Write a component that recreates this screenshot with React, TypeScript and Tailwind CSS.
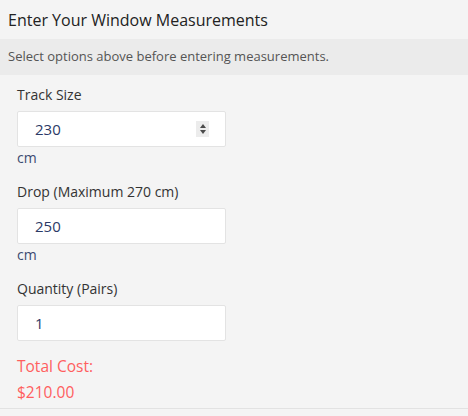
import React from "react";

const font = { fontFamily: "'Open Sans', Lato, sans-serif" };

function Field({
  label,
  value,
  unit,
  spinner,
}: {
  label: string;
  value: string;
  unit?: string;
  spinner?: boolean;
}) {
  return (
    <div className="mb-[14px]">
      <label className="block text-[14px] leading-[20px] text-[#333] mb-[6px]">{label}</label>
      <div className="flex items-center w-[209px] h-[36px] bg-white border border-[#e3e3e3] rounded-[2px]">
        <input
          className="flex-1 min-w-0 h-full pl-[17px] text-[15px] text-[#2c3a66] bg-transparent outline-none"
          defaultValue={value}
          style={font}
        />
        {spinner && (
          <div className="mr-[16px] w-[13px] h-[16px] bg-[#ececec] flex flex-col items-center justify-center gap-[2px]">
            <svg width="6" height="4" viewBox="0 0 6 4">
              <path d="M3 0 L6 4 L0 4 Z" fill="#4a4a4a" />
            </svg>
            <svg width="6" height="4" viewBox="0 0 6 4">
              <path d="M0 0 L6 0 L3 4 Z" fill="#4a4a4a" />
            </svg>
          </div>
        )}
      </div>
      {unit && <div className="mt-[1px] text-[14px] leading-[20px] text-[#3b4a70]">{unit}</div>}
    </div>
  );
}

export default function App() {
  return (
    <div className="w-[468px] h-[416px] bg-[#f4f4f4] overflow-hidden" style={font}>
      {/* Header */}
      <div className="h-[39px] flex items-center px-[8px] text-[16px] text-[#222]">
        Enter Your Window Measurements
      </div>
      <div className="h-[36px] flex items-center px-[8px] bg-[#ebebeb] text-[13px] text-[#555]">
        Select options above before entering measurements.
      </div>

      {/* Form */}
      <div className="pl-[17px] pt-[10px] border-b border-[#e2e2e2] h-[334px]">
        <Field label="Track Size" value="230" unit="cm" spinner />
        <Field label="Drop (Maximum 270 cm)" value="250" unit="cm" />
        <Field label="Quantity (Pairs)" value="1" />
        <div className="-mt-[2px] text-[15.5px] leading-[26px] text-[#ff5e5e]">
          <div>Total Cost:</div>
          <div>$210.00</div>
        </div>
      </div>
    </div>
  );
}
